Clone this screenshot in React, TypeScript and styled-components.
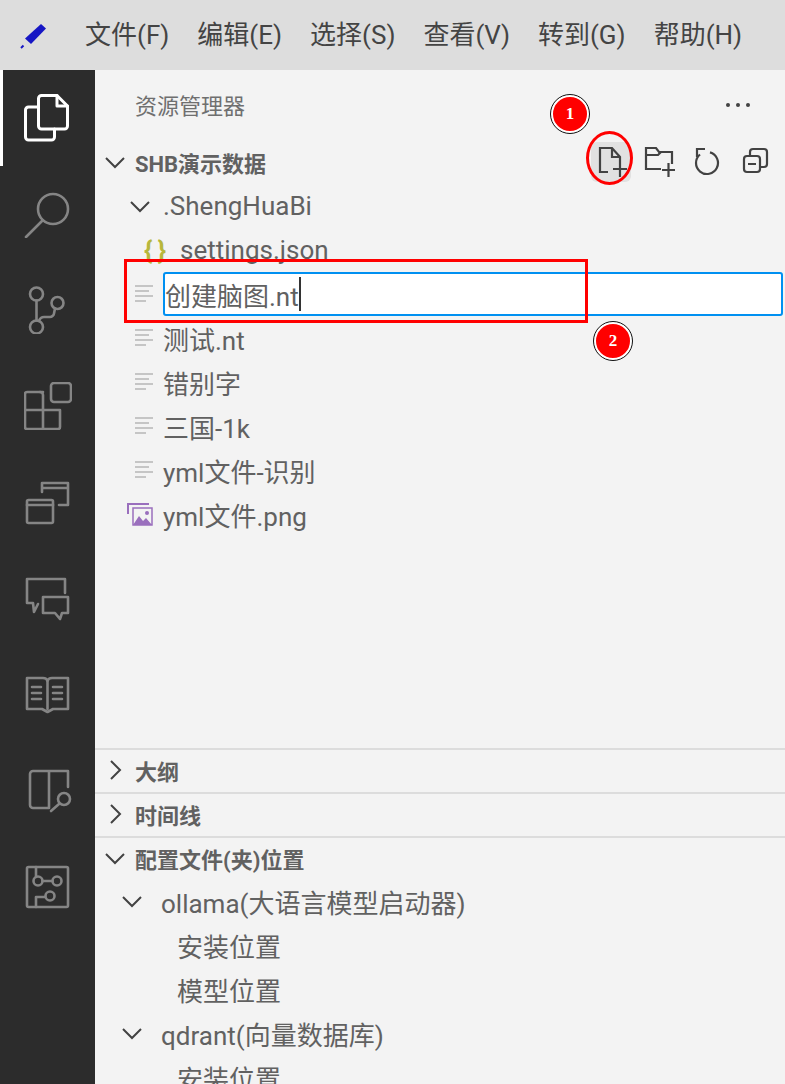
import React from 'react'
import styled, { createGlobalStyle } from 'styled-components'

const GlobalStyle = createGlobalStyle`
    html, body {
        margin: 0;
        padding: 0;
        background: #f3f3f3;
    }
    * {
        box-sizing: border-box;
    }
`

const Page = styled.div`
    position: relative;
    width: 785px;
    height: 1084px;
    overflow: hidden;
    font-family: Roboto, "Noto Sans CJK SC", sans-serif;
    color: #616161;
    display: flex;
    flex-direction: column;
`

const TitleBar = styled.div`
    height: 70px;
    flex: none;
    background: #dddddd;
    display: flex;
    align-items: center;
    padding-left: 20px;
`

const Logo = styled.svg`
    width: 28px;
    height: 28px;
    flex: none;
    margin-right: 37px;
`

const MenuItem = styled.div`
    font-size: 26px;
    line-height: 36px;
    color: #444444;
    white-space: nowrap;
    margin-right: 28px;
`

const Body = styled.div`
    flex: 1;
    display: flex;
    min-height: 0;
`

const ActivityBar = styled.div`
    width: 95px;
    flex: none;
    background: #2c2c2c;
    display: flex;
    flex-direction: column;
`

const ActivityItem = styled.div<{ $active?: boolean }>`
    height: 96px;
    flex: none;
    display: flex;
    align-items: center;
    justify-content: center;
    border-left: 3px solid ${p => (p.$active ? '#ffffff' : 'transparent')};
    padding-right: 3px;
`

const ActivityIcon = styled.svg<{ $active?: boolean }>`
    width: 48px;
    height: 48px;
    fill: none;
    stroke: ${p => (p.$active ? '#ffffff' : '#858585')};
    stroke-width: ${p => (p.$active ? 3 : 2.6)};
    stroke-linejoin: round;
    stroke-linecap: round;
`

const SideBar = styled.div`
    flex: 1;
    min-width: 0;
    background: #f3f3f3;
    display: flex;
    flex-direction: column;
`

const SideTitle = styled.div`
    height: 71px;
    flex: none;
    display: flex;
    align-items: flex-start;
    justify-content: space-between;
    padding: 21px 35px 0 40px;
    font-size: 22px;
    line-height: 32px;
    color: #6f6f6f;
`

const MoreDots = styled.div`
    display: flex;
    gap: 6px;
    padding-top: 12px;
`

const Dot = styled.span`
    width: 4px;
    height: 4px;
    border-radius: 50%;
    background: #424242;
`

const TreeArea = styled.div`
    height: 607px;
    flex: none;
`

const SectionHeader = styled.div<{ $divided?: boolean }>`
    height: 44px;
    flex: none;
    display: flex;
    align-items: center;
    padding-left: 8px;
    padding-bottom: 2px;
    border-top: ${p => (p.$divided ? '2px solid #dcdcdc' : 'none')};
    font-size: 22px;
    font-weight: 700;
    color: #616161;
    white-space: nowrap;
`

const SectionChevron = styled.svg`
    width: 24px;
    height: 24px;
    flex: none;
    margin-right: 8px;
    fill: none;
    stroke: #424242;
    stroke-width: 2;
`

const Toolbar = styled.div`
    margin-left: auto;
    display: flex;
    gap: 8px;
    padding-right: 10px;
`

const ToolButton = styled.div<{ $hover?: boolean }>`
    width: 40px;
    height: 40px;
    border-radius: 6px;
    background: ${p => (p.$hover ? '#e1e1e1' : 'transparent')};
`

const ToolIcon = styled.svg`
    display: block;
    width: 40px;
    height: 40px;
    fill: none;
    stroke: #424242;
    stroke-width: 2.2;
`

const Row = styled.div<{ $indent: number }>`
    height: 44px;
    flex: none;
    display: flex;
    align-items: center;
    padding-left: ${p => p.$indent}px;
    padding-bottom: 2px;
    font-size: 26px;
    color: #616161;
    white-space: nowrap;
`

const RowChevron = styled(SectionChevron)<{ $gap: number }>`
    margin-right: ${p => p.$gap}px;
`

const FileLines = styled.svg`
    width: 20px;
    height: 20px;
    flex: none;
    margin-right: 9px;
    stroke: #c5c5c5;
    stroke-width: 2;
`

const ImageIcon = styled.svg`
    width: 26px;
    height: 26px;
    flex: none;
    margin-right: 10px;
`

const Braces = styled.span`
    width: 36px;
    flex: none;
    font-size: 26px;
    font-weight: 700;
    color: #b7b73b;
    letter-spacing: 5px;
`

const NameInput = styled.div`
    flex: 1;
    height: 44px;
    margin-right: 2px;
    display: flex;
    align-items: center;
    background: #ffffff;
    border: 2px solid #0090f1;
    border-radius: 3px;
`

const Caret = styled.span`
    width: 2px;
    height: 34px;
    background: #333333;
`

const Badge = styled.div<{ $left: number; $top: number }>`
    position: absolute;
    left: ${p => p.$left}px;
    top: ${p => p.$top}px;
    width: 38px;
    height: 38px;
    border-radius: 50%;
    background: #ff0000;
    border: 2px solid #ffffff;
    outline: 1px solid #111111;
    color: #ffffff;
    font-family: "Liberation Serif", serif;
    font-weight: 700;
    font-size: 17px;
    display: flex;
    align-items: center;
    justify-content: center;
`

const MarkRect = styled.div`
    position: absolute;
    left: 124px;
    top: 259px;
    width: 464px;
    height: 64px;
    border: 3px solid #ff0000;
`

const MarkEllipse = styled.div`
    position: absolute;
    left: 586px;
    top: 131px;
    width: 47px;
    height: 54px;
    border: 3px solid #ff0000;
    border-radius: 50%;
`

const activityIcons = [
    <>
        <path d="M14.500 13H4.500a3 3 0 0 0-3 3v27a3 3 0 0 0 3 3h23a3 3 0 0 0 3-3v-8" />
        <path d="M17.500 1.500H33l10.500 10.500V32a3 3 0 0 1-3 3h-23a3 3 0 0 1-3-3V4.500a3 3 0 0 1 3-3z" />
        <path d="M33 1.500V12h10.500" />
    </>,
    <>
        <circle cx="29" cy="19" r="15" />
        <path d="M2 47l16-16" />
    </>,
    <>
        <circle cx="12.500" cy="8" r="6.500" />
        <circle cx="33.500" cy="17" r="6" />
        <circle cx="12.500" cy="41" r="6.500" />
        <path d="M12.500 14.500v20M15 35c1-3 3-4 5-4h6c2 0 4-2 4-3.500l1-5" />
    </>,
    <>
        <rect x="27" y="1" width="20" height="19" rx="3" />
        <path d="M19 10H3a2 2 0 0 0-2 2v33a2 2 0 0 0 2 2h31a2 2 0 0 0 2-2V28H1" />
        <path d="M16 10a3 3 0 0 1 3 3v34" />
    </>,
    <>
        <path d="M18 14V5h26v22h-9M18 10h26" />
        <rect x="3" y="22" width="26" height="23" rx="1.500" />
        <path d="M3 27h26" />
    </>,
    <>
        <path d="M41 19V5H3v24h6l1 9 4-8" />
        <path d="M19 23h25v16h-6l-2 6-5-6H19z" />
    </>,
    <>
        <path d="M3 8h16c2 0 4 1 4.500 3 .5-2 2.500-3 4.500-3h16v31H29l-5.500 3-5.500-3H3z" />
        <path d="M23.500 11v28" />
        <path d="M8 17h9M8 23h9M8 29h9M29 17h9M29 23h9M29 29h9" />
    </>,
    <>
        <path d="M44 21V5H9a3 3 0 0 0-3 3v31a3 3 0 0 0 3 3h16V5" />
        <circle cx="40" cy="33" r="6" />
        <path d="M27 45l8-7" />
    </>,
    <>
        <rect x="3" y="5" width="41" height="40" rx="1.500" />
        <path d="M12 5v10M12 45V35h9M18.500 19h10" />
        <circle cx="14" cy="19" r="4.500" />
        <circle cx="33" cy="19" r="4.500" />
        <circle cx="26" cy="34" r="4.500" />
    </>,
]

const ChevronDown = () => <path d="M3 8l9 9 9-9" />
const ChevronRight = () => <path d="M8 3l9 9-9 9" />

const FileGlyph = () => (
    <FileLines viewBox="0 0 20 20">
        <path d="M1 2h18M1 7h14M1 12h18M1 17h11" />
    </FileLines>
)

function FileRow({ name }: { name: string }) {
    return (
        <Row $indent={39}>
            <FileGlyph />
            {name}
        </Row>
    )
}

function SubHeader({ indent, gap, name }: { indent: number; gap: number; name: string }) {
    return (
        <Row $indent={indent}>
            <RowChevron viewBox="0 0 24 24" $gap={gap}><ChevronDown /></RowChevron>
            {name}
        </Row>
    )
}

export default function App() {
    return (
        <Page>
            <GlobalStyle />
            <TitleBar>
                <Logo viewBox="0 0 28 28">
                    <path d="M5 17.500L21 3l5 4.500L11 23z" fill="#1616c4" />
                    <path d="M1 27l2.500-2.500" stroke="#1616c4" strokeWidth="2" />
                </Logo>
                {['文件(F)', '编辑(E)', '选择(S)', '查看(V)', '转到(G)', '帮助(H)'].map(m => (
                    <MenuItem key={m}>{m}</MenuItem>
                ))}
            </TitleBar>
            <Body>
                <ActivityBar>
                    {activityIcons.map((icon, i) => (
                        <ActivityItem key={i} $active={i === 0}>
                            <ActivityIcon viewBox="0 0 48 48" $active={i === 0}>{icon}</ActivityIcon>
                        </ActivityItem>
                    ))}
                </ActivityBar>
                <SideBar>
                    <SideTitle>
                        资源管理器
                        <MoreDots><Dot /><Dot /><Dot /></MoreDots>
                    </SideTitle>
                    <TreeArea>
                        <SectionHeader>
                            <SectionChevron viewBox="0 0 24 24"><ChevronDown /></SectionChevron>
                            SHB演示数据
                            <Toolbar>
                                <ToolButton $hover>
                                    <ToolIcon viewBox="0 0 40 40">
                                        <path d="M17 30H9V6h12l8 9v5M21 6v9h8M22 27h14M29 20v15" />
                                    </ToolIcon>
                                </ToolButton>
                                <ToolButton>
                                    <ToolIcon viewBox="0 0 40 40">
                                        <path d="M22 27H7V6h10l3 4h13v12M7 13h12l3-3" />
                                        <path d="M23 28h13M29.500 21v14" />
                                    </ToolIcon>
                                </ToolButton>
                                <ToolButton>
                                    <ToolIcon viewBox="0 0 40 40">
                                        <path d="M13 12.500A11 11 0 1 0 23 10.400" />
                                        <path d="M10 15V7h8" />
                                    </ToolIcon>
                                </ToolButton>
                                <ToolButton>
                                    <ToolIcon viewBox="0 0 40 40">
                                        <rect x="9" y="14" width="16" height="16" rx="3" />
                                        <path d="M15 14v-4a3 3 0 0 1 3-3h11a3 3 0 0 1 3 3v12a3 3 0 0 1-3 3h-4M13 22h8" />
                                    </ToolIcon>
                                </ToolButton>
                            </Toolbar>
                        </SectionHeader>
                        <SubHeader indent={33} gap={11} name=".ShengHuaBi" />
                        <Row $indent={49}>
                            <Braces>{'{}'}</Braces>
                            settings.json
                        </Row>
                        <Row $indent={39}>
                            <FileGlyph />
                            <NameInput>创建脑图.nt<Caret /></NameInput>
                        </Row>
                        <FileRow name="测试.nt" />
                        <FileRow name="错别字" />
                        <FileRow name="三国-1k" />
                        <FileRow name="yml文件-识别" />
                        <Row $indent={32}>
                            <ImageIcon viewBox="0 0 26 26">
                                <path d="M1 13V3h21" fill="none" stroke="#9a6fbd" strokeWidth="2" />
                                <rect x="6" y="7" width="19" height="17" fill="none" stroke="#9a6fbd" strokeWidth="1.500" />
                                <path d="M6 24l6-9 4 5 3-3 6 7z" fill="#9a6fbd" />
                                <circle cx="20" cy="12" r="2" fill="#9a6fbd" />
                            </ImageIcon>
                            yml文件.png
                        </Row>
                    </TreeArea>
                    <SectionHeader $divided>
                        <SectionChevron viewBox="0 0 24 24"><ChevronRight /></SectionChevron>
                        大纲
                    </SectionHeader>
                    <SectionHeader $divided>
                        <SectionChevron viewBox="0 0 24 24"><ChevronRight /></SectionChevron>
                        时间线
                    </SectionHeader>
                    <SectionHeader $divided>
                        <SectionChevron viewBox="0 0 24 24"><ChevronDown /></SectionChevron>
                        配置文件(夹)位置
                    </SectionHeader>
                    <SubHeader indent={25} gap={17} name="ollama(大语言模型启动器)" />
                    <Row $indent={82}>安装位置</Row>
                    <Row $indent={82}>模型位置</Row>
                    <SubHeader indent={25} gap={17} name="qdrant(向量数据库)" />
                    <Row $indent={82}>安装位置</Row>
                </SideBar>
            </Body>
            <MarkRect />
            <MarkEllipse />
            <Badge $left={551} $top={95}>1</Badge>
            <Badge $left={594} $top={322}>2</Badge>
        </Page>
    )
}
